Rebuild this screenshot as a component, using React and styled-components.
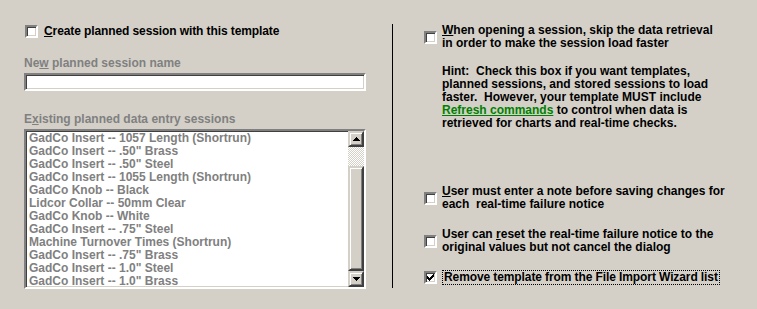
import React from 'react';
import styled, { createGlobalStyle } from 'styled-components';

const GlobalStyle = createGlobalStyle`
    html, body {
        margin: 0;
        padding: 0;
        background: #d4d0c8;
    }
    body {
        font-family: "Liberation Sans", Arial, sans-serif;
        font-size: 12px;
        font-weight: bold;
        color: #000;
    }
`;

const Page = styled.div`
    width: 757px;
    height: 309px;
    display: flex;
    background: #d4d0c8;
    overflow: hidden;
`;

const LeftPane = styled.div`
    width: 342px;
    margin-left: 24px;
    display: flex;
    flex-direction: column;
`;

const Divider = styled.div`
    width: 1px;
    height: 264px;
    margin: 24px 31px 0 26px;
    background: #000;
`;

const RightPane = styled.div`
    flex: 1;
    display: flex;
    flex-direction: column;
`;

const CheckRow = styled.div`
    display: flex;
    align-items: center;
    gap: ${p => p.gap || 5}px;
    margin-top: ${p => p.top}px;
    margin-left: ${p => p.indent || 0}px;
    line-height: 13px;
`;

const Box = styled.span`
    flex: none;
    width: 9px;
    height: 9px;
    background: #fff;
    border: 2px solid;
    border-color: #808080 #fff #fff #808080;
    box-shadow: inset 1px 1px 0 #404040, inset -1px -1px 0 #d4d0c8;
    display: flex;
    align-items: center;
    justify-content: center;
`;

const Label = styled.span`
    white-space: pre;
    letter-spacing: ${p => p.spacing || 0}px;
`;

const FocusLabel = styled.span`
    white-space: pre;
    border: 1px dotted #000;
    padding: 0 1px;
    letter-spacing: -0.1px;
`;

const FieldLabel = styled.div`
    color: #808080;
    line-height: 13px;
    margin-top: ${p => p.top}px;
`;

const TextInput = styled.div`
    margin-top: 3px;
    height: 14px;
    background: #fff;
    border: 2px solid;
    border-color: #808080 #fff #fff #808080;
    box-shadow: inset 1px 1px 0 #404040, inset -1px -1px 0 #d4d0c8;
`;

const ListBox = styled.div`
    margin-top: 3px;
    height: 156px;
    display: flex;
    background: #fff;
    border: 2px solid;
    border-color: #808080 #fff #fff #808080;
    box-shadow: inset 1px 1px 0 #404040, inset -1px -1px 0 #d4d0c8;
`;

const Items = styled.div`
    flex: 1;
    padding: 1px 0 0 3px;
    overflow: hidden;
`;

const Item = styled.div`
    height: 13px;
    line-height: 13px;
    color: #808080;
    white-space: pre;
`;

const ScrollBar = styled.div`
    width: 16px;
    display: flex;
    flex-direction: column;
`;

const ScrollButton = styled.div`
    width: 12px;
    height: 12px;
    background: #d4d0c8;
    border: 2px solid;
    border-color: #d4d0c8 #404040 #404040 #d4d0c8;
    box-shadow: inset 1px 1px 0 #fff, inset -1px -1px 0 #808080;
    display: flex;
    align-items: center;
    justify-content: center;
`;

const Track = styled.div`
    height: ${p => p.size}px;
    background: repeating-conic-gradient(#fff 0 25%, #d4d0c8 0 50%) 0 0 / 2px 2px;
`;

const Thumb = styled.div`
    flex: 1;
    background: #d4d0c8;
    border: 2px solid;
    border-color: #d4d0c8 #404040 #404040 #d4d0c8;
    box-shadow: inset 1px 1px 0 #fff, inset -1px -1px 0 #808080;
`;

const Hint = styled.div`
    margin: 15px 0 0 18px;
    line-height: 13px;
    white-space: pre;
`;

const Link = styled.span`
    color: #008000;
    text-decoration: underline;
`;

const Arrow = ({ down }) => (
    <svg width="7" height="4" viewBox="0 0 7 4">
        <path d={down ? 'M0 0h7L3.5 4z' : 'M3.5 0L7 4H0z'} fill="#000" shapeRendering="crispEdges" />
    </svg>
);

const Check = () => (
    <svg width="7" height="7" viewBox="0 0 7 7">
        <path d="M0 2h1v1h1v1h1v-1h1v-1h1v-1h1v-1h1v3h-1v1h-1v1h-1v1h-1v1h-1v-1h-1v-1h-1z" fill="#000" shapeRendering="crispEdges" />
    </svg>
);

const Checkbox = ({ checked }) => (
    <Box>{checked && <Check />}</Box>
);

const sessions = [
    'GadCo Insert -- 1057 Length (Shortrun)',
    'GadCo Insert -- .50" Brass',
    'GadCo Insert -- .50" Steel',
    'GadCo Insert -- 1055 Length (Shortrun)',
    'GadCo Knob -- Black',
    'Lidcor Collar -- 50mm Clear',
    'GadCo Knob -- White',
    'GadCo Insert -- .75" Steel',
    'Machine Turnover Times (Shortrun)',
    'GadCo Insert -- .75" Brass',
    'GadCo Insert -- 1.0" Steel',
    'GadCo Insert -- 1.0" Brass',
];

const App = () => {
    return (
        <Page>
            <GlobalStyle />
            <LeftPane>
                <CheckRow top={25} indent={1} gap={6}>
                    <Checkbox />
                    <Label spacing={-0.1}><u>C</u>reate planned session with this template</Label>
                </CheckRow>

                <FieldLabel top={19}>Ne<u>w</u> planned session name</FieldLabel>
                <TextInput />

                <FieldLabel top={22}>E<u>x</u>isting planned data entry sessions</FieldLabel>
                <ListBox>
                    <Items>
                        {sessions.map((s, i) => (
                            <Item key={i}>{s}</Item>
                        ))}
                    </Items>
                    <ScrollBar>
                        <ScrollButton><Arrow /></ScrollButton>
                        <Track size={19} />
                        <Thumb />
                        <ScrollButton><Arrow down /></ScrollButton>
                    </ScrollBar>
                </ListBox>
            </LeftPane>

            <Divider />

            <RightPane>
                <CheckRow top={24}>
                    <Checkbox />
                    <Label><u>W</u>hen opening a session, skip the data retrieval{'\n'}in order to make the session load faster</Label>
                </CheckRow>

                <Hint>
                    {'Hint:  Check this box if you want templates,\nplanned sessions, and stored sessions to load\nfaster.  However, your template MUST include\n'}
                    <Link>Refresh commands</Link>
                    {' to control when data is\nretrieved for charts and real-time checks.'}
                </Hint>

                <CheckRow top={55}>
                    <Checkbox />
                    <Label><u>U</u>ser must enter a note before saving changes for{'\n'}each  real-time failure notice</Label>
                </CheckRow>

                <CheckRow top={17}>
                    <Checkbox />
                    <Label>User can <u>r</u>eset the real-time failure notice to the{'\n'}original values but not cancel the dialog</Label>
                </CheckRow>

                <CheckRow top={16}>
                    <Checkbox checked />
                    <FocusLabel>Remove template from the File Import Wizard list</FocusLabel>
                </CheckRow>
            </RightPane>
        </Page>
    );
};

export default App;
